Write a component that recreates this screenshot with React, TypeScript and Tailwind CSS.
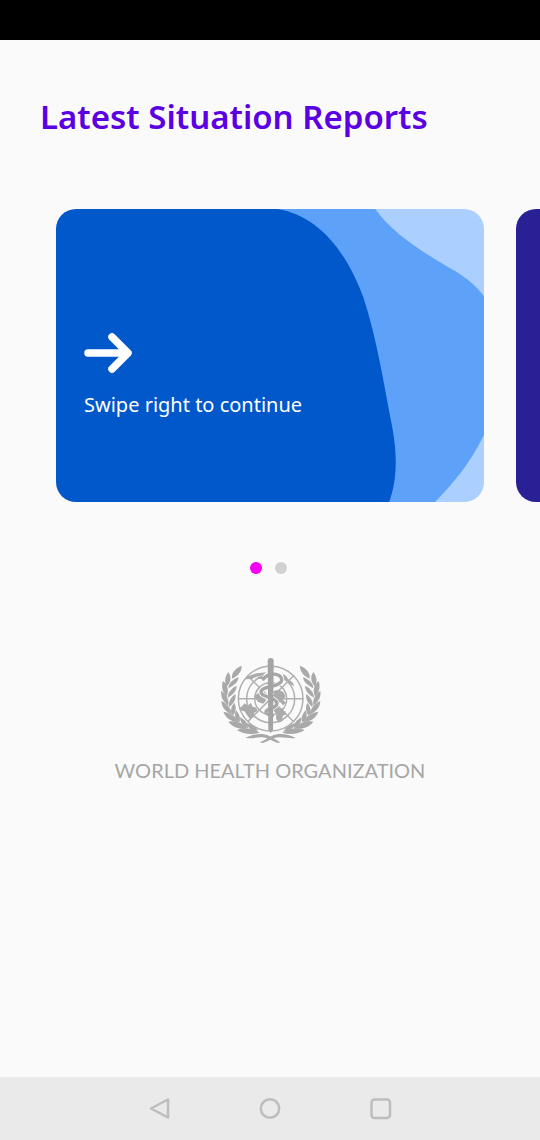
import { useState } from "react";

const REPORT_CARDS = ["First report", "Second report"];

function Branch() {
  return (
    <g fill="#a9a9a9">
      <path d="M83 47C84 62 74 77 54 86C51 70 64 54 83 47Z" />
      <path d="M43 66C53 80 51 96 38 110C30 96 33 79 43 66Z" />
      <path d="M74 82C73 95 62 106 43 115C43 101 55 88 74 82Z" />
      <path d="M27 93C41 105 46 121 38 139C25 126 21 110 27 93Z" />
      <path d="M68 107C68 122 58 133 41 143C41 127 53 114 68 107Z" />
      <path d="M22 122C38 133 46 149 43 167C27 155 19 140 22 122Z" />
      <path d="M64 132C67 147 60 159 46 171C42 155 50 142 64 132Z" />
      <path d="M22 153C40 161 52 176 54 194C35 186 23 172 22 153Z" />
      <path d="M61 158C68 172 66 184 57 197C48 184 50 171 61 158Z" />
      <path d="M28 185C49 188 66 199 73 216C51 215 35 204 28 185Z" />
      <path d="M66 181C77 193 80 204 76 218C62 208 60 195 66 181Z" />
      <path d="M43 215C65 211 86 219 99 235C76 239 56 232 43 215Z" />
      <path d="M78 202C94 210 102 220 102 235C87 229 78 217 78 202Z" />
      <path d="M69 241C91 231 115 234 137 248C112 255 89 253 69 241Z" />
      <path d="M95 219C113 222 125 230 132 243C115 242 101 234 95 219Z" />
    </g>
  );
}

function Emblem() {
  return (
    <svg viewBox="0 0 336 300" className="h-[100px] w-28" role="img" aria-label="World Health Organization emblem">
      <Branch />
      <g transform="translate(341 0) scale(-1 1)">
        <Branch />
      </g>
      <g fill="none" stroke="#b0b0b0" strokeWidth="4.5">
        <circle cx="170" cy="146" r="97" />
        <circle cx="170" cy="146" r="72" />
        <circle cx="170" cy="146" r="48" />
        <path d="M73 146H267M170 49V243M101 77L239 215M239 77L101 215" />
      </g>
      <g fill="#ababab">
        <path d="M91 88C102 77 120 70 136 69L157 67L146 76L128 80L113 87Z" />
        <path d="M206 72L216 77L222 87L237 98L241 109L229 103L219 91L211 88Z" />
        <path d="M76 174L85 168L91 160L102 167L110 158L116 170L127 173L131 183L121 188L117 200L108 207L99 195L91 184L78 181Z" />
        <path d="M120 139L132 129L147 137L156 152L147 161L132 156Z" />
        <path d="M178 123L194 119L208 126L215 139L207 150L216 158L207 166L199 157L186 157L181 143Z" />
        <path d="M181 163L190 158L194 174L207 176L213 190L205 202L207 212L195 218L186 206L187 191L179 182Z" />
        <path d="M207 186L215 183L214 196L208 194Z" />
      </g>
      <path
        d="M148 87C170 63 209 72 202 94C195 112 145 107 141 125C140 143 188 142 189 160C188 177 154 173 156 187"
        fill="none"
        stroke="#fafafa"
        strokeWidth="15"
      />
      <g fill="none" stroke="#a6a6a6" strokeLinecap="round">
        <path d="M148 87C170 63 209 72 202 94C195 112 145 107 141 125C140 143 188 142 189 160C188 177 154 173 156 187Q158 194 176 196" strokeWidth="10" />
        <path d="M134 83L151 84L158 77" strokeWidth="6" />
      </g>
      <path d="M161 34Q161 24 170 24Q179 24 179 34L177 238L170 250L163 238Z" fill="#a4a4a4" />
      <g fill="#a8a8a8">
        <path d="M94 264C117 252 145 247 166 258C181 266 190 272 199 277L191 279C171 272 159 262 143 262C128 261 112 267 94 264Z" />
        <path d="M245 264C222 252 194 247 173 258C158 266 149 272 137 277L147 279C168 272 180 262 196 262C211 261 227 267 245 264Z" />
      </g>
    </svg>
  );
}

function SwipeCard() {
  return (
    <article className="relative flex w-[calc(100%-56px)] shrink-0 overflow-hidden rounded-[20px] bg-[linear-gradient(90deg,#0058cb_50%,#abcfff_50%)]">
      <svg
        viewBox="0 0 429 293"
        preserveAspectRatio="none"
        className="absolute inset-0 h-full w-full"
        aria-hidden="true"
      >
        <path
          d="M210 0H320C338 25 367 43 400 62C413 70 421 77 429 87V226C413 258 397 275 380 293H210Z"
          fill="#5da2f8"
        />
        <path
          d="M200 0H222C264 7 291 43 308 88C322 131 328 172 337 218C343 250 341 273 334 293H200Z"
          fill="#0058cb"
        />
      </svg>
      <div className="relative flex flex-col pt-[124px] pb-[82px] pl-7">
        <svg viewBox="0 0 48 40" className="h-10 w-12" aria-hidden="true">
          <path d="M4 20H42M28 4L44 20L28 36" fill="none" stroke="#fff" strokeWidth="7.5" strokeLinecap="round" strokeLinejoin="round" />
        </svg>
        <p className="mt-4 text-[20px] leading-[31px] whitespace-nowrap text-white">Swipe right to continue</p>
      </div>
    </article>
  );
}

export default function App() {
  const [active, setActive] = useState(0);

  return (
    <div className="flex min-h-screen flex-col overflow-x-hidden bg-[#fafafa] font-['Noto_Sans',sans-serif]">
      <div className="h-10 bg-black" />
      <main className="flex flex-1 flex-col">
        <h1 className="mt-[53px] px-10 text-[33px] leading-[48px] font-semibold whitespace-nowrap text-[#5b00e3]">
          Latest Situation Reports
        </h1>
        <section className="mt-[68px] flex gap-8 overflow-hidden pl-14" aria-label="Situation reports">
          <SwipeCard />
          <article className="w-[calc(100%-56px)] shrink-0 rounded-[20px] bg-[#292096]" />
        </section>
        <div className="mt-[60px] flex justify-center gap-[13px] pr-1">
          {REPORT_CARDS.map((label, index) => (
            <button
              key={label}
              type="button"
              aria-label={label}
              onClick={() => setActive(index)}
              className={`h-3 w-3 rounded-full ${index === active ? "bg-[#f500f5]" : "bg-[#d1d1d1]"}`}
            />
          ))}
        </div>
        <div className="mt-[76px] flex flex-col items-center">
          <Emblem />
          <p className="mt-2 font-['Lato',sans-serif] text-[20px] leading-6 whitespace-nowrap text-[#a6a6a6]">
            WORLD HEALTH ORGANIZATION
          </p>
        </div>
      </main>
      <nav className="flex h-[63px] items-center justify-center gap-[87px] bg-[#eaeaea]">
        <button type="button" aria-label="Back">
          <svg viewBox="0 0 24 24" className="h-6 w-6" fill="none" stroke="#bdbdbd" strokeWidth="2.5" strokeLinejoin="round">
            <path d="M21 2.5V20.5L4 11.5Z" />
          </svg>
        </button>
        <button type="button" aria-label="Home">
          <svg viewBox="0 0 24 24" className="h-6 w-6" fill="none" stroke="#bdbdbd" strokeWidth="2.5">
            <circle cx="12" cy="11.5" r="9.2" />
          </svg>
        </button>
        <button type="button" aria-label="Recent apps">
          <svg viewBox="0 0 24 24" className="h-6 w-6" fill="none" stroke="#bdbdbd" strokeWidth="2.5">
            <rect x="2.5" y="2.5" width="18.5" height="18.5" rx="3" />
          </svg>
        </button>
      </nav>
    </div>
  );
}
